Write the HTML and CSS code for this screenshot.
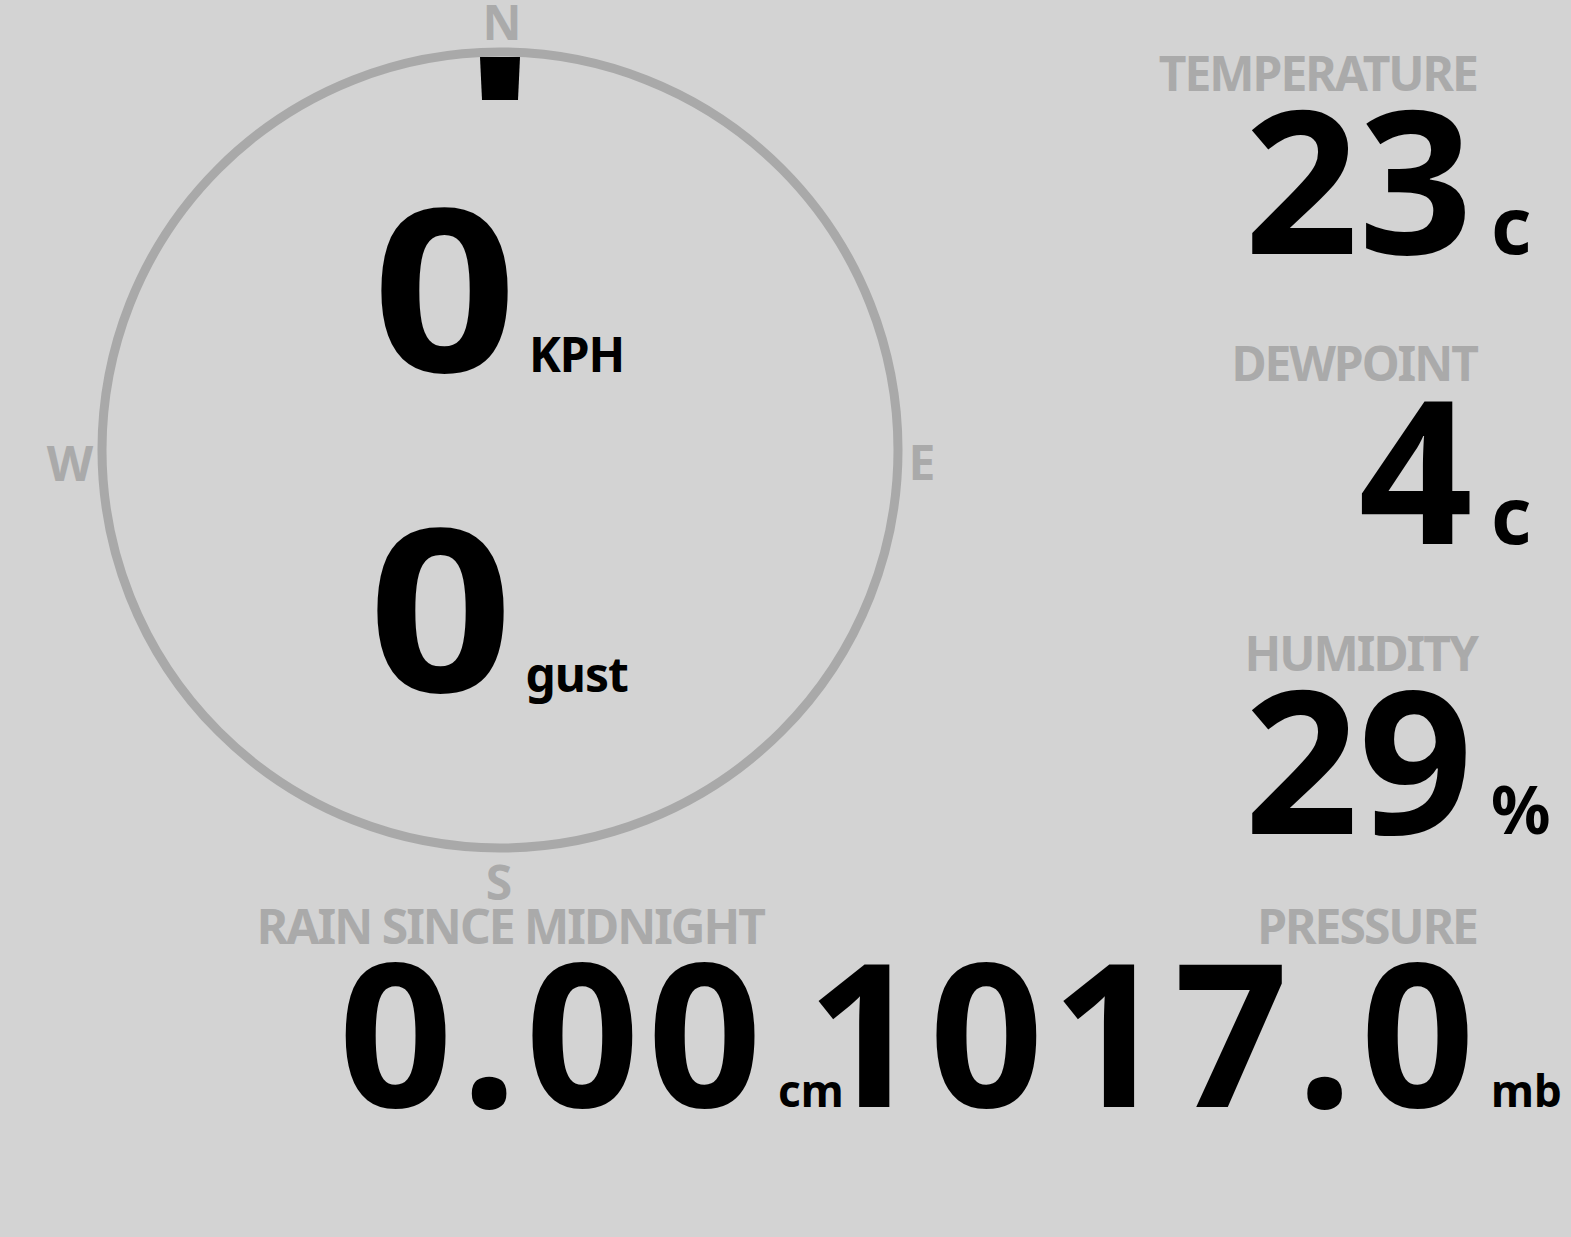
FILE: index.html
```html
<!DOCTYPE html>
<html lang="en">
<head>
  <meta charset="UTF-8" />
  <meta name="viewport" content="width=device-width, initial-scale=1.0" />
  <title>Weather Station</title>
  <link rel="stylesheet" href="styles.css">
</head>
<body>
  <main class="board">
    <div class="top">
      <section class="wind">
        <svg class="compass" viewBox="0 0 1000 902" width="1000" height="902">
          <circle cx="500" cy="450" r="398" fill="none" stroke="#a9a9a9" stroke-width="9" />
          <polygon points="480,57 520,57 518,100 482,100" fill="#000" />
          <text x="502" y="40" text-anchor="middle">N</text>
          <text x="922" y="480" text-anchor="middle">E</text>
          <text x="499" y="900" text-anchor="middle">S</text>
          <text x="70" y="481" text-anchor="middle">W</text>
        </svg>

        <div class="speed">
          <span class="speed-value">0</span>
          <span class="speed-unit">KPH</span>
        </div>
        <div class="speed">
          <span class="speed-value">0</span>
          <span class="speed-unit">gust</span>
        </div>
      </section>

      <section class="readings">
        <div class="stat">
          <div class="stat-label">TEMPERATURE</div>
          <div class="stat-value">23</div>
          <div class="stat-unit unit-big">c</div>
        </div>
        <div class="stat">
          <div class="stat-label">DEWPOINT</div>
          <div class="stat-value">4</div>
          <div class="stat-unit unit-big">c</div>
        </div>
        <div class="stat">
          <div class="stat-label">HUMIDITY</div>
          <div class="stat-value">29</div>
          <div class="stat-unit unit-pct">%</div>
        </div>
      </section>
    </div>

    <div class="bottom">
      <section class="stat rain">
        <div class="stat-label">RAIN SINCE MIDNIGHT</div>
        <div class="stat-value wide">0.00</div>
        <div class="stat-unit unit-small">cm</div>
      </section>
      <section class="stat pressure">
        <div class="stat-label">PRESSURE</div>
        <div class="stat-value wide">1017.0</div>
        <div class="stat-unit unit-small">mb</div>
      </section>
    </div>
  </main>
</body>
</html>
```

FILE: styles.css
```css
body {
  margin: 0;
  background-color: #d3d3d3;
  font-family: 'Noto Sans', 'DejaVu Sans', sans-serif;
  font-weight: 700;
  color: #000;
}

.board {
  width: 1571px;
  height: 1237px;
  overflow: hidden;
}

.top {
  display: flex;
  height: 902px;
}

/* wind dial */
.wind {
  position: relative;
  width: 1000px;
  height: 902px;
  flex-shrink: 0;
  display: flex;
  flex-direction: column;
  align-items: center;
  gap: 94px;
  padding-top: 171px;
  box-sizing: border-box;
}

.compass {
  position: absolute;
  top: 0;
  left: 0;
}

.compass text {
  font-family: 'Noto Sans', 'DejaVu Sans', sans-serif;
  font-weight: 700;
  font-size: 48px;
  fill: #aaaaaa;
}

.speed {
  position: relative;
  display: flex;
  align-items: baseline;
  gap: 20px;
  margin-left: 4px;
}

.speed-value {
  font-size: 226px;
  line-height: 1;
  transform: scaleX(1.12);
}

.speed-unit {
  font-size: 48px;
  line-height: 1;
  letter-spacing: -1px;
}

/* readings */
.readings {
  flex: 1;
  padding-top: 49px;
}

.stat {
  display: grid;
  grid-template-columns: minmax(0, 1fr) 98px;
  margin-bottom: 76px;
}

.stat-label {
  grid-column: 1;
  text-align: right;
  font-size: 48px;
  line-height: 48px;
  letter-spacing: -2px;
  margin-right: -4px;
  color: #aaaaaa;
  white-space: nowrap;
}

.stat-value {
  grid-column: 1;
  grid-row: 2;
  justify-self: unsafe end;
  font-size: 200px;
  line-height: 160px;
  white-space: nowrap;
  align-self: last baseline;
}

.stat-value.wide {
  letter-spacing: 8px;
  margin-right: -10px;
}

.stat-unit {
  grid-column: 2;
  grid-row: 2;
  align-self: last baseline;
  padding-left: 18px;
  line-height: 1;
  white-space: nowrap;
}

.unit-big {
  font-size: 78px;
}

.unit-pct {
  font-size: 66px;
}

.unit-small {
  font-size: 44px;
}

/* bottom row */
.bottom {
  display: flex;
}

.rain {
  width: 805px;
  grid-template-columns: minmax(0, 1fr) 45px;
  margin: 0;
}

.pressure {
  flex: 1;
  margin: 0;
}
```
